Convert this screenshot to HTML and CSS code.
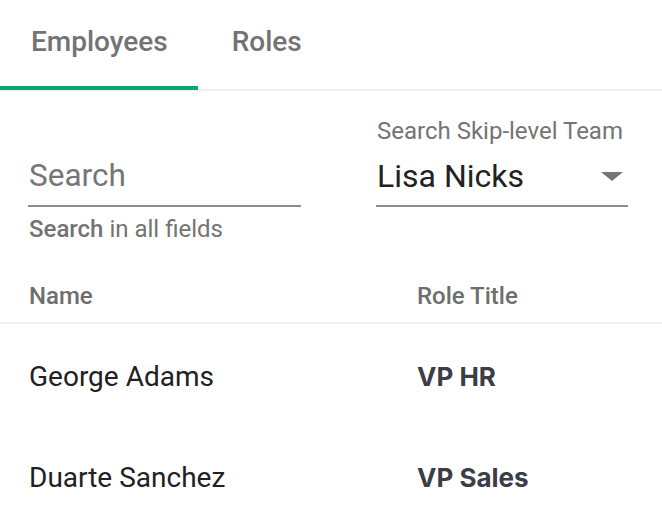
FILE: index.html
```html
<!DOCTYPE html>
<html lang="en">
<head>
  <meta charset="UTF-8" />
  <meta name="viewport" content="width=device-width, initial-scale=1.0"/>
  <title>Employees</title>
  <link rel="stylesheet" href="styles.css">
</head>
<body>
  <div class="tabs">
    <div class="tab active">Employees</div>
    <div class="tab">Roles</div>
  </div>

  <div class="filters">
    <div class="field search-field">
      <input type="text" placeholder="Search" />
      <div class="helper"><b>Search</b> in all fields</div>
    </div>
    <div class="field select-field">
      <label>Search Skip-level Team</label>
      <div class="select">
        <span>Lisa Nicks</span>
        <span class="arrow"></span>
      </div>
    </div>
  </div>

  <div class="table">
    <div class="row head">
      <div class="col-name">Name</div>
      <div class="col-role">Role Title</div>
    </div>
    <div class="row">
      <div class="col-name">George Adams</div>
      <div class="col-role">VP HR</div>
    </div>
    <div class="row">
      <div class="col-name">Duarte Sanchez</div>
      <div class="col-role">VP Sales</div>
    </div>
  </div>
</body>
</html>
```

FILE: styles.css
```css
body {
  margin: 0;
  background: #fff;
  font-family: Roboto, 'Liberation Sans', sans-serif;
  color: #212121;
}

.tabs {
  display: flex;
  height: 89px;
  border-bottom: 2px solid #efefef;
}

.tab {
  padding: 0 30px 0 31px;
  font-size: 28px;
  font-weight: 500;
  color: #737373;
  line-height: 84px;
  border-bottom: 3px solid transparent;
  margin-bottom: -2px;
}

.tab + .tab {
  padding-left: 34px;
}

.tab.active {
  border-bottom: 4px solid #0aa86c;
  margin-bottom: -1px;
}

.filters {
  display: flex;
  gap: 75px;
  padding: 26px 34px 0 28px;
  height: 153px;
}

.field {
  display: flex;
  flex-direction: column;
}

.search-field {
  width: 273px;
  padding-top: 29px;
}

.select-field {
  width: 252px;
}

input {
  border: none;
  border-bottom: 2px solid #8c8c8c;
  outline: none;
  padding: 0 0 0 1px;
  font-family: inherit;
  font-size: 31.5px;
  color: #212121;
  height: 59px;
  box-sizing: content-box;
}

input::placeholder {
  color: #767676;
}

.helper {
  margin-top: 8px;
  margin-left: 1px;
  font-size: 24px;
  color: #737373;
}

.helper b {
  font-weight: 500;
}

label {
  font-size: 24px;
  color: #747474;
  margin-left: 1px;
  height: 29px;
  line-height: 29px;
}

.select {
  display: flex;
  align-items: center;
  justify-content: space-between;
  height: 59px;
  padding: 0 5px 0 1px;
  font-size: 32px;
  color: #212121;
  border-bottom: 2px solid #8c8c8c;
}

.arrow {
  width: 0;
  height: 0;
  border-left: 11px solid transparent;
  border-right: 11px solid transparent;
  border-top: 9px solid #757575;
  margin-top: 2px;
}

.row {
  display: flex;
  align-items: center;
  height: 101px;
  font-size: 28px;
}

.row.head {
  height: 54px;
  box-sizing: border-box;
  font-size: 24px;
  font-weight: 500;
  color: #6e6e6e;
  border-bottom: 2px solid #efefef;
}

.row.head + .row {
  margin-top: 2px;
}

.col-name {
  width: 388px;
  padding-left: 29px;
}

.row:not(.head) .col-role {
  font-family: Inter, Roboto, sans-serif;
  font-weight: 700;
  font-size: 26px;
  color: #3b3d47;
}
```
